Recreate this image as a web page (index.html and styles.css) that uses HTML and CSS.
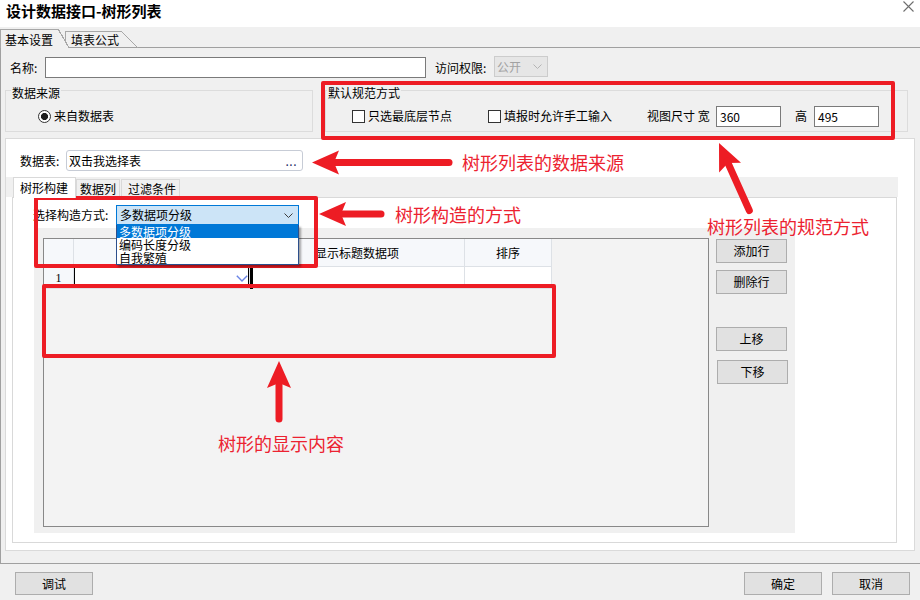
FILE: index.html
```html
<!DOCTYPE html>
<html lang="zh-CN">
<head>
<meta charset="utf-8">
<title>设计数据接口-树形列表</title>
<link rel="stylesheet" href="styles.css">
</head>
<body>
<div class="titlebar">
  <span class="title">设计数据接口-树形列表</span>
  <svg class="close" width="11" height="11" viewBox="0 0 11 11"><path d="M0.5 0.5 L10.5 10.5 M10.5 0.5 L0.5 10.5" stroke="#6e6e6e" stroke-width="1.1" fill="none"/></svg>
</div>
<div class="tabstrip">
  <div class="tab tab-active">基本设置</div>
  <div class="tab tab-inactive">填表公式</div>
</div>
<div class="panel">
  <div class="row-name">
    <span class="lbl-name">名称:</span>
    <div class="input input-name"></div>
    <span class="lbl-access">访问权限:</span>
    <div class="sel-dis"><span>公开</span><svg width="9" height="5" viewBox="0 0 9 5"><polyline points="0.5,0.5 4.5,4.5 8.5,0.5" fill="none" stroke="#b4b4b4"/></svg></div>
  </div>
  <div class="groups">
    <div class="group g1">
      <span class="legend">数据来源</span>
      <span class="radio"></span><span>来自数据表</span>
    </div>
    <div class="group g2">
      <span class="legend">默认规范方式</span>
      <span class="check"></span><span class="ctext">只选最底层节点</span>
      <span class="check check2"></span><span class="ctext">填报时允许手工输入</span>
      <span class="size-lbl">视图尺寸 宽</span>
      <div class="input input-num">360</div>
      <span class="h-lbl">高</span>
      <div class="input input-num">495</div>
    </div>
  </div>
  <div class="sheet">
    <div class="ds-row">
      <span class="ds-lbl">数据表:</span>
      <div class="ds-input"><span>双击我选择表</span><span class="dots">...</span></div>
    </div>
    <div class="itabs">
      <div class="itab itab-active">树形构建</div>
      <div class="itab itab-cols">数据列</div>
      <div class="itab itab-filter">过滤条件</div>
    </div>
    <div class="ipage">
      <div class="sel-row">
        <span class="sel-lbl">选择构造方式:</span>
        <div class="combo">
          <span>多数据项分级</span>
          <svg width="9" height="5" viewBox="0 0 9 5"><polyline points="0.5,0.5 4.5,4.5 8.5,0.5" fill="none" stroke="#3c3c3c"/></svg>
          <ul class="droplist">
            <li class="picked">多数据项分级</li>
            <li>编码长度分级</li>
            <li>自我繁殖</li>
          </ul>
        </div>
      </div>
      <div class="work">
        <div class="grid">
          <div class="gc hc rh"></div>
          <div class="gc hc h1"></div>
          <div class="gc hc">显示标题数据项</div>
          <div class="gc hc">排序</div>
          <div class="gc rh rnum">1</div>
          <div class="gc cell edit"><svg class="editchev" width="12" height="7" viewBox="0 0 12 7"><polyline points="0.8,0.8 6,6 11.2,0.8" fill="none" stroke="#6a84e6" stroke-width="1.4"/></svg></div>
          <div class="gc cell"></div>
          <div class="gc cell"></div>
        </div>
        <div class="btncol">
          <div class="btn">添加行</div>
          <div class="btn b-del">删除行</div>
          <div class="btn b-up">上移</div>
          <div class="btn b-down">下移</div>
        </div>
      </div>
    </div>
  </div>
</div>
<div class="bottombar">
  <div class="btn bbtn">调试</div>
  <div class="btn bbtn b-ok">确定</div>
  <div class="btn bbtn b-cancel">取消</div>
</div>

<div class="mark mark-norm"></div>
<div class="mark mark-combo"></div>
<div class="mark mark-grid"></div>
<svg class="arrows" width="920" height="600" viewBox="0 0 920 600">
  <g fill="#ed1c24" stroke="#ed1c24">
    <g transform="translate(312 162.5)"><path d="M0 0 L27 -12 L22 0 L27 12 Z" stroke="none"/><line x1="20" y1="0" x2="137" y2="0" stroke-width="7" stroke-linecap="round"/></g>
    <g transform="translate(319 214)"><path d="M0 0 L27 -12 L22 0 L27 12 Z" stroke="none"/><line x1="20" y1="0" x2="62" y2="0" stroke-width="7" stroke-linecap="round"/></g>
    <g transform="translate(719 143) rotate(65.8)"><path d="M0 0 L27 -12 L22 0 L27 12 Z" stroke="none"/><line x1="20" y1="0" x2="74" y2="0" stroke-width="7" stroke-linecap="round"/></g>
    <g transform="translate(279 361) rotate(90)"><path d="M0 0 L27 -12 L22 0 L27 12 Z" stroke="none"/><line x1="20" y1="0" x2="58" y2="0" stroke-width="7" stroke-linecap="round"/></g>
  </g>
</svg>
<div class="note note-src">树形列表的数据来源</div>
<div class="note note-way">树形构造的方式</div>
<div class="note note-norm">树形列表的规范方式</div>
<div class="note note-show">树形的显示内容</div>
</body>
</html>
```

FILE: styles.css
```css
* { box-sizing: border-box; margin: 0; padding: 0; }

body {
  position: relative;
  width: 920px;
  height: 600px;
  overflow: hidden;
  background: #f0f0f0;
  font-family: "Noto Sans CJK SC", "Microsoft YaHei", sans-serif;
  font-size: 12px;
  line-height: 14px;
  color: #000;
}

/* title bar */
.titlebar {
  height: 27px;
  background: #fff;
  display: flex;
  align-items: flex-start;
  justify-content: space-between;
  padding-left: 6px;
}
.title { font-size: 15px; font-weight: bold; line-height: 16px; margin-top: 3px; }
.close { margin-top: 1px; margin-right: 6px; }

/* outer tabs */
.tabstrip { height: 20px; display: flex; align-items: flex-end; }
.tab { position: relative; line-height: 16px; }
.tab-active {
  z-index: 2;
  width: 58px;
  height: 19px;
  margin-bottom: -1px;
  border-top: 1px solid #a8a8a8;
  border-left: 1px solid #a8a8a8;
  background: #f0f0f0;
  padding: 2px 0 0 4px;
}
.tab-active::after {
  content: "";
  position: absolute;
  left: 100%;
  top: -1px;
  width: 11px;
  height: 19px;
  background: linear-gradient(to bottom left, transparent calc(50% - 0.7px), #a8a8a8 calc(50% - 0.7px), #a8a8a8 calc(50% + 0.5px), #f0f0f0 calc(50% + 0.5px));
}
.tab-inactive {
  width: 56px;
  height: 16px;
  margin-left: 7px;
  border-top: 1px solid #a8a8a8;
  border-left: 1px solid #a8a8a8;
  padding-left: 5px;
  line-height: 15px;
}
.tab-inactive::after {
  content: "";
  position: absolute;
  left: 100%;
  top: -1px;
  width: 17px;
  height: 17px;
  background: linear-gradient(to bottom left, transparent calc(50% - 0.7px), #a8a8a8 calc(50% - 0.7px), #a8a8a8 calc(50% + 0.5px), transparent calc(50% + 0.5px));
}

/* panel */
.panel {
  width: 920px;
  height: 517px;
  border: 1px solid #a0a0a0;
  border-right: none;
}

.row-name { display: flex; align-items: center; height: 21px; margin-top: 9px; }
.lbl-name { width: 35px; margin-left: 9px; }
.input { background: #fff; border: 1px solid #7a7a7a; height: 21px; }
.input-name { width: 381px; }
.lbl-access { width: 59px; margin-left: 9px; }
.sel-dis {
  width: 54px;
  height: 21px;
  margin-top: -2px;
  background: #e6e6e6;
  border: 1px solid #cccccc;
  color: #a2a2a2;
  display: flex;
  align-items: center;
  justify-content: space-between;
  padding: 0 5px 0 2px;
}

.groups { display: flex; margin-top: 12px; height: 42px; }
.group {
  position: relative;
  height: 42px;
  border: 1px solid #dcdcdc;
  display: flex;
  align-items: center;
  padding-top: 10px;
}
.legend {
  position: absolute;
  top: -5px;
  background: #f0f0f0;
  padding: 0 1px;
  line-height: 14px;
}
.g1 { margin-left: 4px; width: 308px; padding-left: 32px; }
.g1 .legend { left: 5px; }
.g2 { margin-left: 12px; width: 583px; padding-left: 26px; }
.g2 .legend { left: 1px; }

.radio {
  width: 13px;
  height: 13px;
  border: 1px solid #333;
  border-radius: 50%;
  background: radial-gradient(circle, #1e1e1e 3.3px, #fff 3.8px);
  margin-right: 3px;
}
.check {
  width: 13px;
  height: 13px;
  border: 1px solid #333;
  background: #fff;
  margin-right: 3px;
}
.check2 { margin-left: 36px; }
.size-lbl { margin-left: 35px; width: 69px; white-space: pre; }
.input-num { width: 65px; padding-left: 3px; line-height: 19px; }
.h-lbl { margin-left: 14px; width: 19px; }

/* white sheet */
.sheet {
  margin-top: 6px;
  margin-left: 4px;
  width: 910px;
  height: 413px;
  background: #fff;
  border: 1px solid #dadada;
}
.ds-row { display: flex; align-items: center; margin-top: 11px; height: 21px; padding-left: 14px; }
.ds-lbl { width: 46px; }
.ds-input {
  width: 237px;
  height: 21px;
  border: 1px solid #c7ccd6;
  border-radius: 3px;
  display: flex;
  align-items: center;
  justify-content: space-between;
  padding: 0 5px 0 2px;
}
.dots { color: #1c2a66; letter-spacing: 0.5px; }

.itabs {
  display: flex;
  align-items: flex-end;
  height: 20px;
  margin-top: 6px;
  width: 892px;
  background: #f0f0f0;
}
.itab {
  height: 18px;
  border: 1px solid #d9d9d9;
  border-bottom: none;
  background: #f0f0f0;
  line-height: 17px;
}
.itab-active {
  position: relative;
  z-index: 1;
  height: 21px;
  margin-bottom: -1px;
  margin-left: 7px;
  width: 63px;
  background: #fff;
  padding-left: 6px;
  line-height: 19px;
}
.itab-cols { width: 44px; padding-left: 3px; }
.itab-filter { width: 59px; margin-left: 1px; padding-left: 6px; }

.ipage {
  margin-left: 6px;
  width: 885px;
  height: 346px;
  border: 1px solid #d9d9d9;
  background: #fff;
}
.sel-row { display: flex; align-items: center; margin-top: 7px; height: 20px; padding-left: 20px; }
.sel-lbl { width: 83px; }
.combo {
  position: relative;
  width: 183px;
  height: 20px;
  background: #cce4f7;
  border: 1px solid #0078d7;
  display: flex;
  align-items: center;
  justify-content: space-between;
  padding: 0 5px 0 3px;
}
.droplist {
  position: absolute;
  top: calc(100% + 1px);
  left: -1px;
  width: 183px;
  list-style: none;
  background: #fff;
  border: 1px solid #2c4f8c;
  border-top: none;
  box-shadow: 2px 2px 2px rgba(0, 0, 0, 0.35);
  z-index: 5;
}
.droplist li { height: 13px; line-height: 13px; padding-left: 2px; }
.droplist li.picked { background: #0078d7; color: #fff; }

.work {
  display: flex;
  align-items: flex-start;
  margin-top: 3px;
  margin-left: 21px;
  width: 761px;
  height: 305px;
  background: #f0f0f0;
  padding: 10px 0 0 9px;
}
.grid {
  width: 666px;
  height: 289px;
  border: 1px solid #888;
  background: #f3f3f3;
  display: grid;
  grid-template-columns: 30px 176px 215px 87px;
  grid-template-rows: 28px 22px;
  align-content: start;
  justify-content: start;
}
.gc { border-right: 1px solid #dde1e6; border-bottom: 1px solid #dde1e6; }
.hc { background: #f6f8fb; display: flex; align-items: center; justify-content: center; }
.h1 { box-shadow: inset 0 -2px 0 #4a7fd6; }
.rh { background: #f6f8fb; }
.rnum { display: flex; align-items: center; justify-content: center; font-family: "Liberation Serif", serif; }
.cell { background: #fff; }
.edit { position: relative; box-shadow: inset 0 0 0 1px #000; }
.edit::after {
  content: "";
  position: absolute;
  right: -4px;
  top: 0;
  bottom: -1px;
  width: 3px;
  background: #000;
}
.editchev { position: absolute; right: 1px; top: 8px; }

.btncol { display: flex; flex-direction: column; margin-left: 7px; padding-top: 1px; }
.btn {
  width: 71px;
  height: 24px;
  background: #e1e1e1;
  border: 1px solid #adadad;
  display: flex;
  align-items: center;
  justify-content: center;
}
.b-del { margin-top: 7px; }
.b-up { margin-top: 33px; }
.b-down { margin-top: 9px; margin-left: 1px; }

/* bottom bar */
.bottombar { display: flex; height: 37px; padding: 8px 10px 0 15px; }
.bbtn { width: 78px; height: 23px; }
.b-ok { margin-left: auto; }
.b-cancel { margin-left: 10px; }

/* annotations */
.mark {
  position: absolute;
  border: 4px solid #ed1c24;
  border-radius: 2px;
}
.mark-norm { left: 321px; top: 81px; width: 574px; height: 59px; }
.mark-combo { left: 34px; top: 196px; width: 284px; height: 72px; }
.mark-grid { left: 42px; top: 284px; width: 514px; height: 74px; }
.arrows { position: absolute; left: 0; top: 0; pointer-events: none; }
.note {
  position: absolute;
  font-size: 18px;
  line-height: 18px;
  color: #ec2230;
  white-space: nowrap;
}
.note-src { left: 462px; top: 153px; }
.note-way { left: 395px; top: 205px; }
.note-norm { left: 707px; top: 217px; }
.note-show { left: 218px; top: 434px; }
```
